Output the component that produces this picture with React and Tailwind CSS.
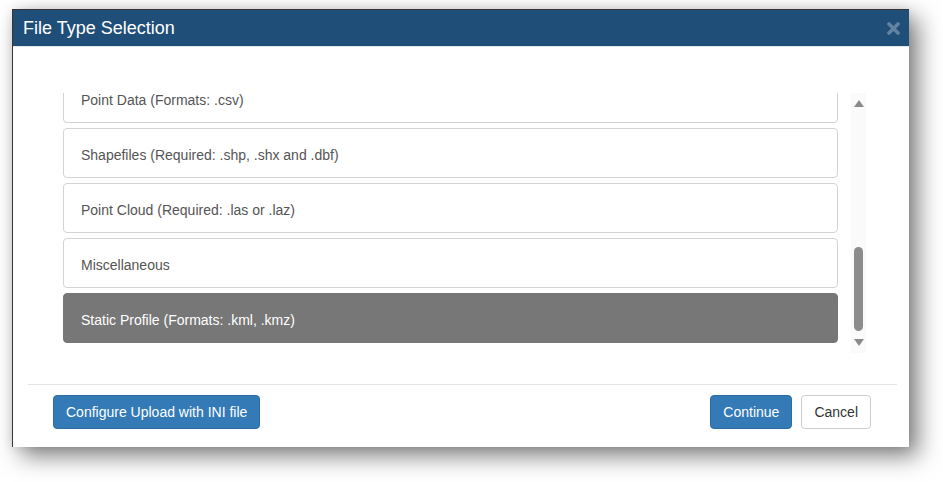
import React, { useLayoutEffect, useRef, useState } from 'react';

const fileTypes = [
    { id: 'point', label: 'Point Data (Formats: .csv)' },
    { id: 'shape', label: 'Shapefiles (Required: .shp, .shx and .dbf)' },
    { id: 'cloud', label: 'Point Cloud (Required: .las or .laz)' },
    { id: 'misc', label: 'Miscellaneous' },
    { id: 'profile', label: 'Static Profile (Formats: .kml, .kmz)' },
];

function ScrollTrack() {
    return (
        <div className="w-[15px] h-full bg-[#fafafa] flex flex-col items-center">
            <svg width="10" height="7" viewBox="0 0 10 7" className="mt-[7px]">
                <path d="M5 0 L10 7 L0 7 Z" fill="#8a8a8a" />
            </svg>
            <div className="flex-1 w-full flex flex-col items-center justify-end pb-[8px]">
                <div className="w-[9px] h-[84px] rounded-full bg-[#8c8c8c]"></div>
            </div>
            <svg width="10" height="7" viewBox="0 0 10 7" className="mb-[7px]">
                <path d="M0 0 L10 0 L5 7 Z" fill="#8a8a8a" />
            </svg>
        </div>
    );
}

export default function App() {
    const [selected, setSelected] = useState('profile');
    const listRef = useRef(null);

    // list is shown scrolled to the bottom
    useLayoutEffect(() => {
        if (listRef.current) listRef.current.scrollTop = listRef.current.scrollHeight;
    }, []);

    return (
        <div className="w-[943px] h-[482px] bg-white pt-[9px] pl-[12px] font-['Liberation_Sans',Arial,sans-serif]">
            <div className="w-[897px] h-[438px] flex flex-col bg-white border-l border-t border-[#3a3333] shadow-[9px_9px_22px_rgba(0,0,0,0.5),0_0_10px_rgba(0,0,0,0.1)]">
                {/* Header */}
                <div className="h-[37px] shrink-0 bg-[#1f4e79] border-b border-[#e5e5e5] flex items-center justify-between pl-[10px] pr-[9px]">
                    <h4 className="text-[18px] leading-none text-white -mt-[1px]">File Type Selection</h4>
                    <button type="button" aria-label="Close" className="text-white/30">
                        <svg width="13" height="13" viewBox="0 0 13 13">
                            <path d="M2 2 L11 11 M11 2 L2 11" stroke="currentColor" strokeWidth="3.6" strokeLinecap="round" />
                        </svg>
                    </button>
                </div>

                {/* Body */}
                <div className="shrink-0 pt-[46px] pb-[31px] pl-[50px] flex">
                    <div
                        ref={listRef}
                        className="w-[775px] h-[260px] overflow-y-scroll [scrollbar-width:none] flex flex-col gap-[5px] pb-[10px]"
                    >
                        {fileTypes.map((t) => (
                            <div
                                key={t.id}
                                onClick={() => setSelected(t.id)}
                                className={
                                    selected === t.id
                                        ? 'h-[50px] shrink-0 flex items-center pt-[4px] px-[17px] rounded-[4px] border border-[#777] bg-[#777] text-white text-[14px] cursor-pointer'
                                        : 'h-[50px] shrink-0 flex items-center pt-[4px] px-[17px] rounded-[4px] border border-[#d3d3d3] bg-white text-[#555] text-[14px] cursor-pointer'
                                }
                            >
                                {t.label}
                            </div>
                        ))}
                    </div>
                    <div className="ml-[13px] h-[260px]">
                        <ScrollTrack />
                    </div>
                </div>

                {/* Footer */}
                <div className="flex-1 ml-[15px] mr-[12px] border-t border-[#e5e5e5] pt-[10px] pl-[25px] pr-[26px] flex items-start justify-between">
                    <button type="button" className="h-[34px] px-[12px] rounded-[4px] bg-[#337ab7] border border-[#2e6da4] text-white text-[14px]">
                        Configure Upload with INI file
                    </button>
                    <div className="flex gap-[9px]">
                        <button type="button" className="h-[34px] px-[12px] rounded-[4px] bg-[#337ab7] border border-[#2e6da4] text-white text-[14px]">
                            Continue
                        </button>
                        <button type="button" className="h-[34px] px-[12px] rounded-[4px] bg-white border border-[#ccc] text-[#333] text-[14px]">
                            Cancel
                        </button>
                    </div>
                </div>
            </div>
        </div>
    );
}
